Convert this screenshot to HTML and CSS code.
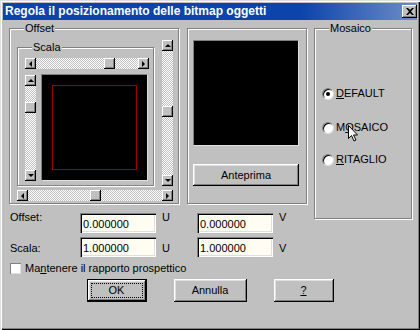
FILE: index.html
```html
<!DOCTYPE html>
<html lang="it">
<head>
    <meta charset="UTF-8">
    <title>Regola il posizionamento delle bitmap oggetti</title>
    <link rel="stylesheet" href="styles.css">
</head>
<body>
<div class="window">
    <!-- barra del titolo -->
    <div class="titlebar">
        <span class="title">Regola il posizionamento delle bitmap oggetti</span>
        <span class="close">
            <svg width="8" height="7" viewBox="0 0 8 7"><path d="M0 0h2l2 2 2-2h2L5 3.5 8 7H6L4 5 2 7H0l3-3.5z" fill="#000"/></svg>
        </span>
    </div>

    <div class="main">
        <!-- gruppo Offset -->
        <fieldset class="group offset">
            <legend>Offset</legend>
            <div class="offset-grid">
                <fieldset class="group scala">
                    <legend>Scala</legend>
                    <div class="hscroll">
                        <span class="sb-btn left"></span>
                        <span class="sb-thumb" style="margin-left:68px"></span>
                        <span class="sb-fill"></span>
                        <span class="sb-btn right"></span>
                    </div>
                    <div class="scala-body">
                        <div class="vscroll short">
                            <span class="sb-btn up"></span>
                            <span class="sb-thumb" style="margin-top:16px"></span>
                            <span class="sb-fill"></span>
                            <span class="sb-btn down"></span>
                        </div>
                        <div class="canvas small"><div class="frame"></div></div>
                    </div>
                </fieldset>
                <div class="vscroll tall">
                    <span class="sb-btn up"></span>
                    <span class="sb-thumb" style="margin-top:55px"></span>
                    <span class="sb-fill"></span>
                    <span class="sb-btn down"></span>
                </div>
                <div class="hscroll wide">
                    <span class="sb-btn left"></span>
                    <span class="sb-thumb" style="margin-left:62px"></span>
                    <span class="sb-fill"></span>
                    <span class="sb-btn right"></span>
                </div>
            </div>
        </fieldset>

        <!-- anteprima -->
        <div class="group preview">
            <div class="canvas big"></div>
            <button class="btn preview-btn">Anteprima</button>
        </div>

        <!-- gruppo Mosaico -->
        <fieldset class="group mosaico">
            <legend>Mosaico</legend>
            <label class="radio"><span class="circle checked"></span><span><u>D</u>EFAULT</span></label>
            <label class="radio"><span class="circle"></span><span>M<u>O</u>SAICO</span></label>
            <label class="radio"><span class="circle"></span><span><u>R</u>ITAGLIO</span></label>
        </fieldset>

        <!-- campi -->
        <div class="fields">
            <span class="lbl top">Offset:</span>
            <input class="field" type="text" value="0.000000">
            <span class="unit top">U</span>
            <input class="field" type="text" value="0.000000">
            <span class="unit top">V</span>

            <span class="lbl low">Scala:</span>
            <input class="field" type="text" value="1.000000">
            <span class="unit low">U</span>
            <input class="field" type="text" value="1.000000">
            <span class="unit low">V</span>
        </div>
    </div>

    <label class="check"><span class="box"></span><span>Ma<u>n</u>tenere il rapporto prospettico</span></label>

    <div class="buttons">
        <button class="btn default"><span class="focus">OK</span></button>
        <button class="btn">Annulla</button>
        <button class="btn"><u>?</u></button>
    </div>

    <!-- puntatore del mouse -->
    <svg class="cursor" width="11" height="17" viewBox="0 0 11 17">
        <path d="M0.5 0.5v13l3-3 2.5 5.5 2-1-2.5-5h4z" fill="#fff" stroke="#000" stroke-width="1"/>
    </svg>
</div>
</body>
</html>
```

FILE: styles.css
```css
* {
    margin: 0;
    padding: 0;
    box-sizing: border-box;
}

body {
    background: #c0c0c0;
    font: 11px/13px "Liberation Sans", Arial, sans-serif;
    color: #000;
}

.window {
    width: 420px;
    height: 330px;
    padding: 3px;
    position: relative;
    box-shadow: inset 1px 1px #dfdfdf, inset 2px 2px #fff, inset -1px -1px #000, inset -2px -2px #808080;
}

/* barra del titolo */
.titlebar {
    height: 17px;
    display: flex;
    align-items: center;
    padding-left: 2px;
    background: linear-gradient(to right, #0b44ab 0%, #0b44ab 72%, #6f8dc8 100%);
}

.title {
    flex: 1;
    color: #fff;
    font-weight: bold;
    font-size: 12px;
}

.close {
    width: 15px;
    height: 13px;
    display: flex;
    align-items: center;
    justify-content: center;
    background: #c0c0c0;
    box-shadow: inset -1px -1px #000, inset 1px 1px #fff, inset -2px -2px #808080;
}

.main {
    display: grid;
    grid-template-columns: 171px 120px 98px;
    column-gap: 7px;
    padding: 2px 0 0 6px;
}

/* riquadri incisi */
.group {
    border: 1px solid #808080;
    box-shadow: 1px 1px 0 #fff, inset 1px 1px 0 #fff;
    min-width: 0;
}

.group legend {
    margin-left: 7px;
    padding: 0 1px;
    background: #c0c0c0;
}

.offset {
    width: 170px;
    padding: 5px 5px 2px 7px;
}

.offset-grid {
    display: grid;
    grid-template-columns: 138px 11px;
    column-gap: 7px;
    row-gap: 4px;
}

.scala {
    width: 137px;
    margin-top: 1px;
    padding: 4px 4px 2px 7px;
}

.scala-body {
    display: flex;
    gap: 5px;
    margin-top: 5px;
}

/* barre di scorrimento */
.hscroll,
.vscroll {
    display: flex;
    background: repeating-conic-gradient(#c0c0c0 0 25%, #fff 0 50%) 0 0 / 2px 2px;
}

.hscroll {
    height: 11px;
}

.vscroll {
    width: 11px;
    flex-direction: column;
}

.vscroll.short {
    height: 106px;
    margin-top: 1px;
}

.vscroll.tall {
    height: 146px;
}

.hscroll.wide {
    grid-column: 1 / 3;
}

.sb-fill {
    flex: 1;
}

.sb-btn,
.sb-thumb {
    width: 11px;
    height: 11px;
    flex: none;
    background: #c0c0c0;
    box-shadow: inset -1px -1px #000, inset 1px 1px #fff, inset -2px -2px #808080;
    display: flex;
    align-items: center;
    justify-content: center;
}

.sb-btn::before {
    content: "";
    border: 3px solid transparent;
}

.sb-btn.left::before {
    border-right-color: #000;
    border-left-width: 0;
    margin-left: -1px;
}

.sb-btn.right::before {
    border-left-color: #000;
    border-right-width: 0;
}

.sb-btn.up::before {
    border-bottom-color: #000;
    border-top-width: 0;
    margin-top: -1px;
}

.sb-btn.down::before {
    border-top-color: #000;
    border-bottom-width: 0;
}

/* aree nere */
.canvas {
    background: #000;
    border: 1px solid;
    border-color: #808080 #dfdfdf #dfdfdf #808080;
}

.canvas.small {
    width: 107px;
    height: 107px;
    padding: 10px;
}

.frame {
    width: 100%;
    height: 100%;
    border: 1px solid #a00000;
}

.canvas.big {
    width: 106px;
    height: 106px;
}

.preview {
    margin-top: 6px;
    padding: 11px 0 0 5px;
}

.btn {
    border: none;
    background: #c0c0c0;
    font: inherit;
    color: #000;
    box-shadow: inset -1px -1px #000, inset 1px 1px #fff, inset -2px -2px #808080, inset 2px 2px #dfdfdf;
}

.preview-btn {
    display: block;
    width: 106px;
    height: 22px;
    margin-top: 18px;
}

/* Mosaico */
.mosaico {
    grid-row: 1 / 3;
    grid-column: 3;
    align-self: start;
    height: 197px;
    padding: 52px 0 0 7px;
}

.radio {
    display: flex;
    align-items: center;
    gap: 2px;
    height: 13px;
    margin-bottom: 21px;
}

.radio:nth-of-type(2) {
    margin-bottom: 19px;
}

.circle {
    width: 12px;
    height: 12px;
    border-radius: 50%;
    background: #fff;
    border: 1px solid;
    border-color: #808080 #dfdfdf #dfdfdf #808080;
    box-shadow: inset 1px 1px #000;
    display: flex;
    align-items: center;
    justify-content: center;
}

.circle.checked::after {
    content: "";
    width: 4px;
    height: 4px;
    border-radius: 50%;
    background: #000;
}

/* campi di testo */
.fields {
    grid-column: 1 / 3;
    display: grid;
    grid-template-columns: 70px 76px 41px 76px auto;
    grid-template-rows: 20px 20px;
    row-gap: 4px;
    margin-top: 9px;
    padding-left: 1px;
}

.field {
    height: 20px;
    width: 76px;
    border: none;
    padding: 1px 0 0 3px;
    font: inherit;
    color: #000;
    background: #fffcf2;
    box-shadow: inset 1px 1px #808080, inset 2px 2px #000, inset -1px -1px #fff, inset -2px -2px #dfdfdf;
}

.unit {
    padding-left: 6px;
}

.top {
    margin-top: -2px;
}

.low {
    margin-top: 5px;
}

.check {
    display: flex;
    align-items: center;
    gap: 4px;
    margin: 5px 0 0 7px;
}

.box {
    width: 11px;
    height: 11px;
    background: #fff;
    box-shadow: inset 1px 1px #808080, inset -1px -1px #dfdfdf;
}

.buttons {
    display: flex;
    justify-content: center;
    gap: 27px;
    margin-top: 4px;
}

.buttons .btn {
    width: 60px;
    height: 23px;
}

.buttons .btn:nth-child(2) {
    width: 73px;
}

.btn.default {
    border: 1px solid #000;
    padding: 3px;
}

.focus {
    display: block;
    height: 100%;
    line-height: 13px;
    border: 1px dotted #000;
}

.cursor {
    position: absolute;
    left: 348px;
    top: 125px;
}
```
